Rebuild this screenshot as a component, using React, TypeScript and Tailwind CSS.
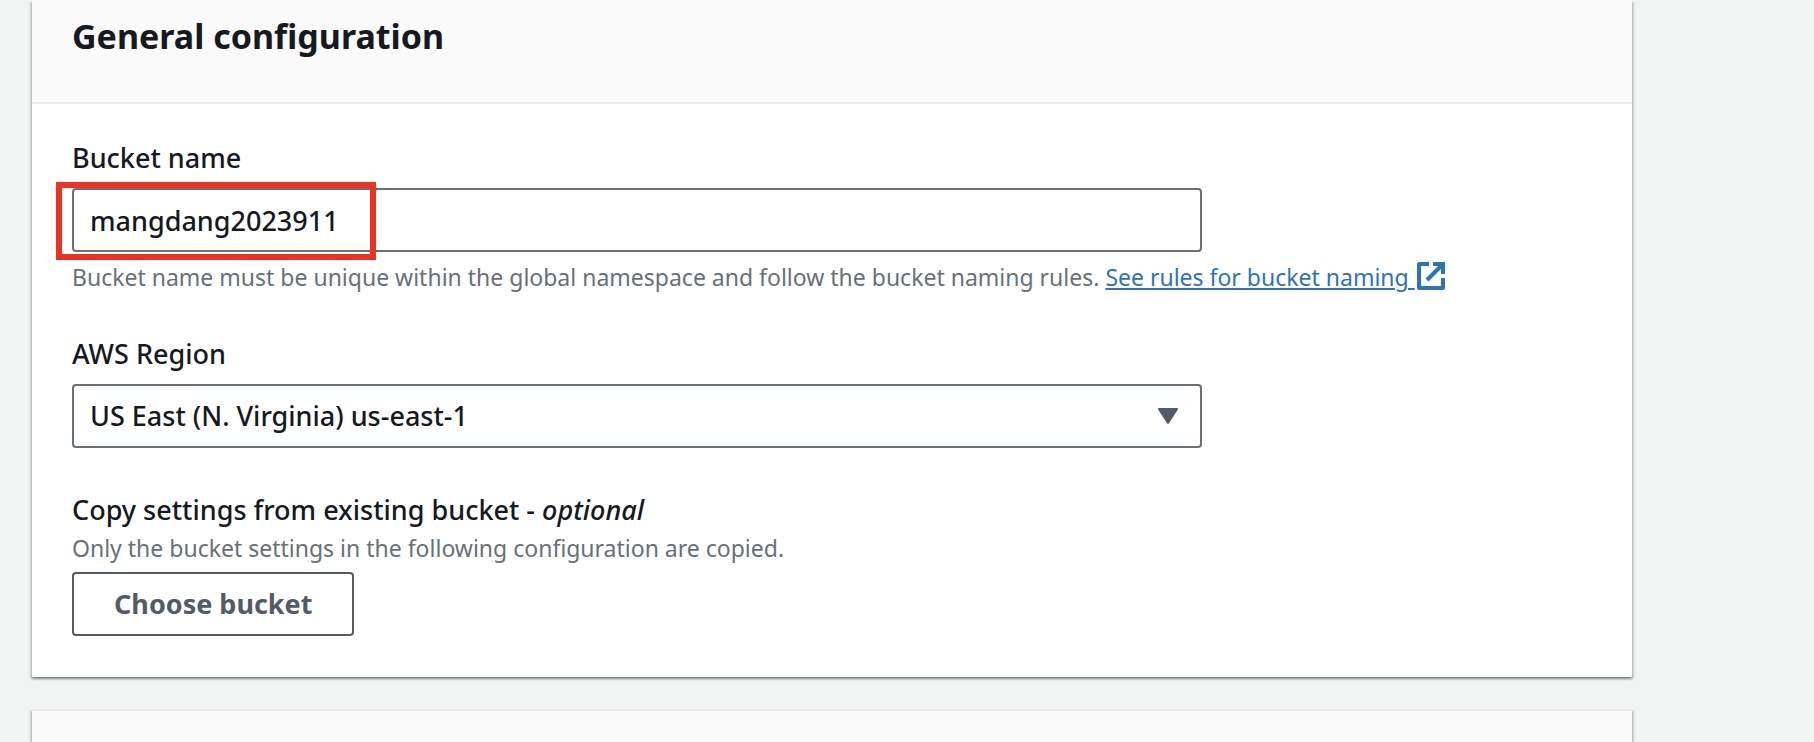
import { useState } from "react";
import type { ReactNode } from "react";

const cardShadow =
  "shadow-[0_2px_2px_0_rgba(0,28,36,0.3),2px_2px_2px_0_rgba(0,28,36,0.15),-2px_2px_2px_0_rgba(0,28,36,0.15)]";

function ExternalIcon() {
  return (
    <svg viewBox="0 0 28 28" className="ml-0.5 inline-block size-7 align-[-4px]" fill="none" aria-hidden="true">
      <path d="M12 2H2V26H26V16" stroke="currentColor" strokeWidth="4" strokeLinejoin="round" />
      <path d="M16 2H26V12" stroke="currentColor" strokeWidth="4" />
      <path d="M26 2L10 18" stroke="currentColor" strokeWidth="4" />
    </svg>
  );
}

function Label({ htmlFor, children }: { htmlFor: string; children: ReactNode }) {
  return (
    <label htmlFor={htmlFor} className="block text-[27px] leading-[44px] font-medium">
      {children}
    </label>
  );
}

export default function App() {
  const [name, setName] = useState("mangdang2023911");
  const [region, setRegion] = useState("us-east-1");

  return (
    <main className="flex min-h-screen flex-col gap-8 overflow-hidden bg-[#f2f3f3] px-8 font-['Noto_Sans',sans-serif] text-[#16191f]">
      <section className={`max-w-[1600px] bg-white ${cardShadow}`}>
        <header className="border-b-2 border-[#eaeded] bg-[#fafafa] px-10 pt-3.5 pb-11">
          <h2 className="text-[34px] leading-[44px] font-bold">General configuration</h2>
        </header>
        <form className="flex flex-col px-10 pt-8 pb-[41px]" onSubmit={(e) => e.preventDefault()}>
          <div>
            <Label htmlFor="bucket-name">Bucket name</Label>
            <div className="relative mt-2 max-w-[1130px]">
              <input
                id="bucket-name"
                type="text"
                value={name}
                onChange={(e) => setName(e.target.value)}
                className="block h-16 w-full rounded-[4px] border-2 border-[#687078] bg-white px-4 text-[27px] font-medium"
              />
              <div className="pointer-events-none absolute -top-1.5 -left-4 h-[78px] w-80 border-6 border-[#ec3323]" />
            </div>
            <p className="mt-1.5 text-[23px] leading-[38px] text-[#687078]">
              Bucket name must be unique within the global namespace and follow the bucket naming rules.{" "}
              <a href="#naming-rules" className="text-[#2e73b8] underline decoration-2 underline-offset-2">
                See rules for bucket naming <ExternalIcon />
              </a>
            </p>
          </div>

          <div className="mt-9">
            <Label htmlFor="region">AWS Region</Label>
            <div className="relative mt-2 max-w-[1130px]">
              <select
                id="region"
                value={region}
                onChange={(e) => setRegion(e.target.value)}
                className="block h-16 w-full appearance-none rounded-[4px] border-2 border-[#687078] bg-white px-4 text-[27px] font-medium"
              >
                <option value="us-east-1">US East (N. Virginia) us-east-1</option>
              </select>
              <svg viewBox="0 0 20 16" className="pointer-events-none absolute top-6 right-6 h-4 w-5 text-[#545b64]" aria-hidden="true">
                <path d="M1 1H19L10 15Z" fill="currentColor" stroke="currentColor" strokeWidth="2" strokeLinejoin="round" />
              </svg>
            </div>
          </div>

          <div className="mt-10">
            <Label htmlFor="choose-bucket">
              Copy settings from existing bucket - <i>optional</i>
            </Label>
            <p className="text-[23px] leading-8 text-[#687078]">
              Only the bucket settings in the following configuration are copied.
            </p>
            <button
              id="choose-bucket"
              type="button"
              className="mt-2 h-16 rounded-[4px] border-2 border-[#545b64] bg-white px-10 text-[27px] font-bold text-[#545b64]"
            >
              Choose bucket
            </button>
          </div>
        </form>
      </section>

      <section className={`max-w-[1600px] flex-1 border-t-2 border-[#eaeded] bg-[#fafafa] ${cardShadow}`} />
    </main>
  );
}
